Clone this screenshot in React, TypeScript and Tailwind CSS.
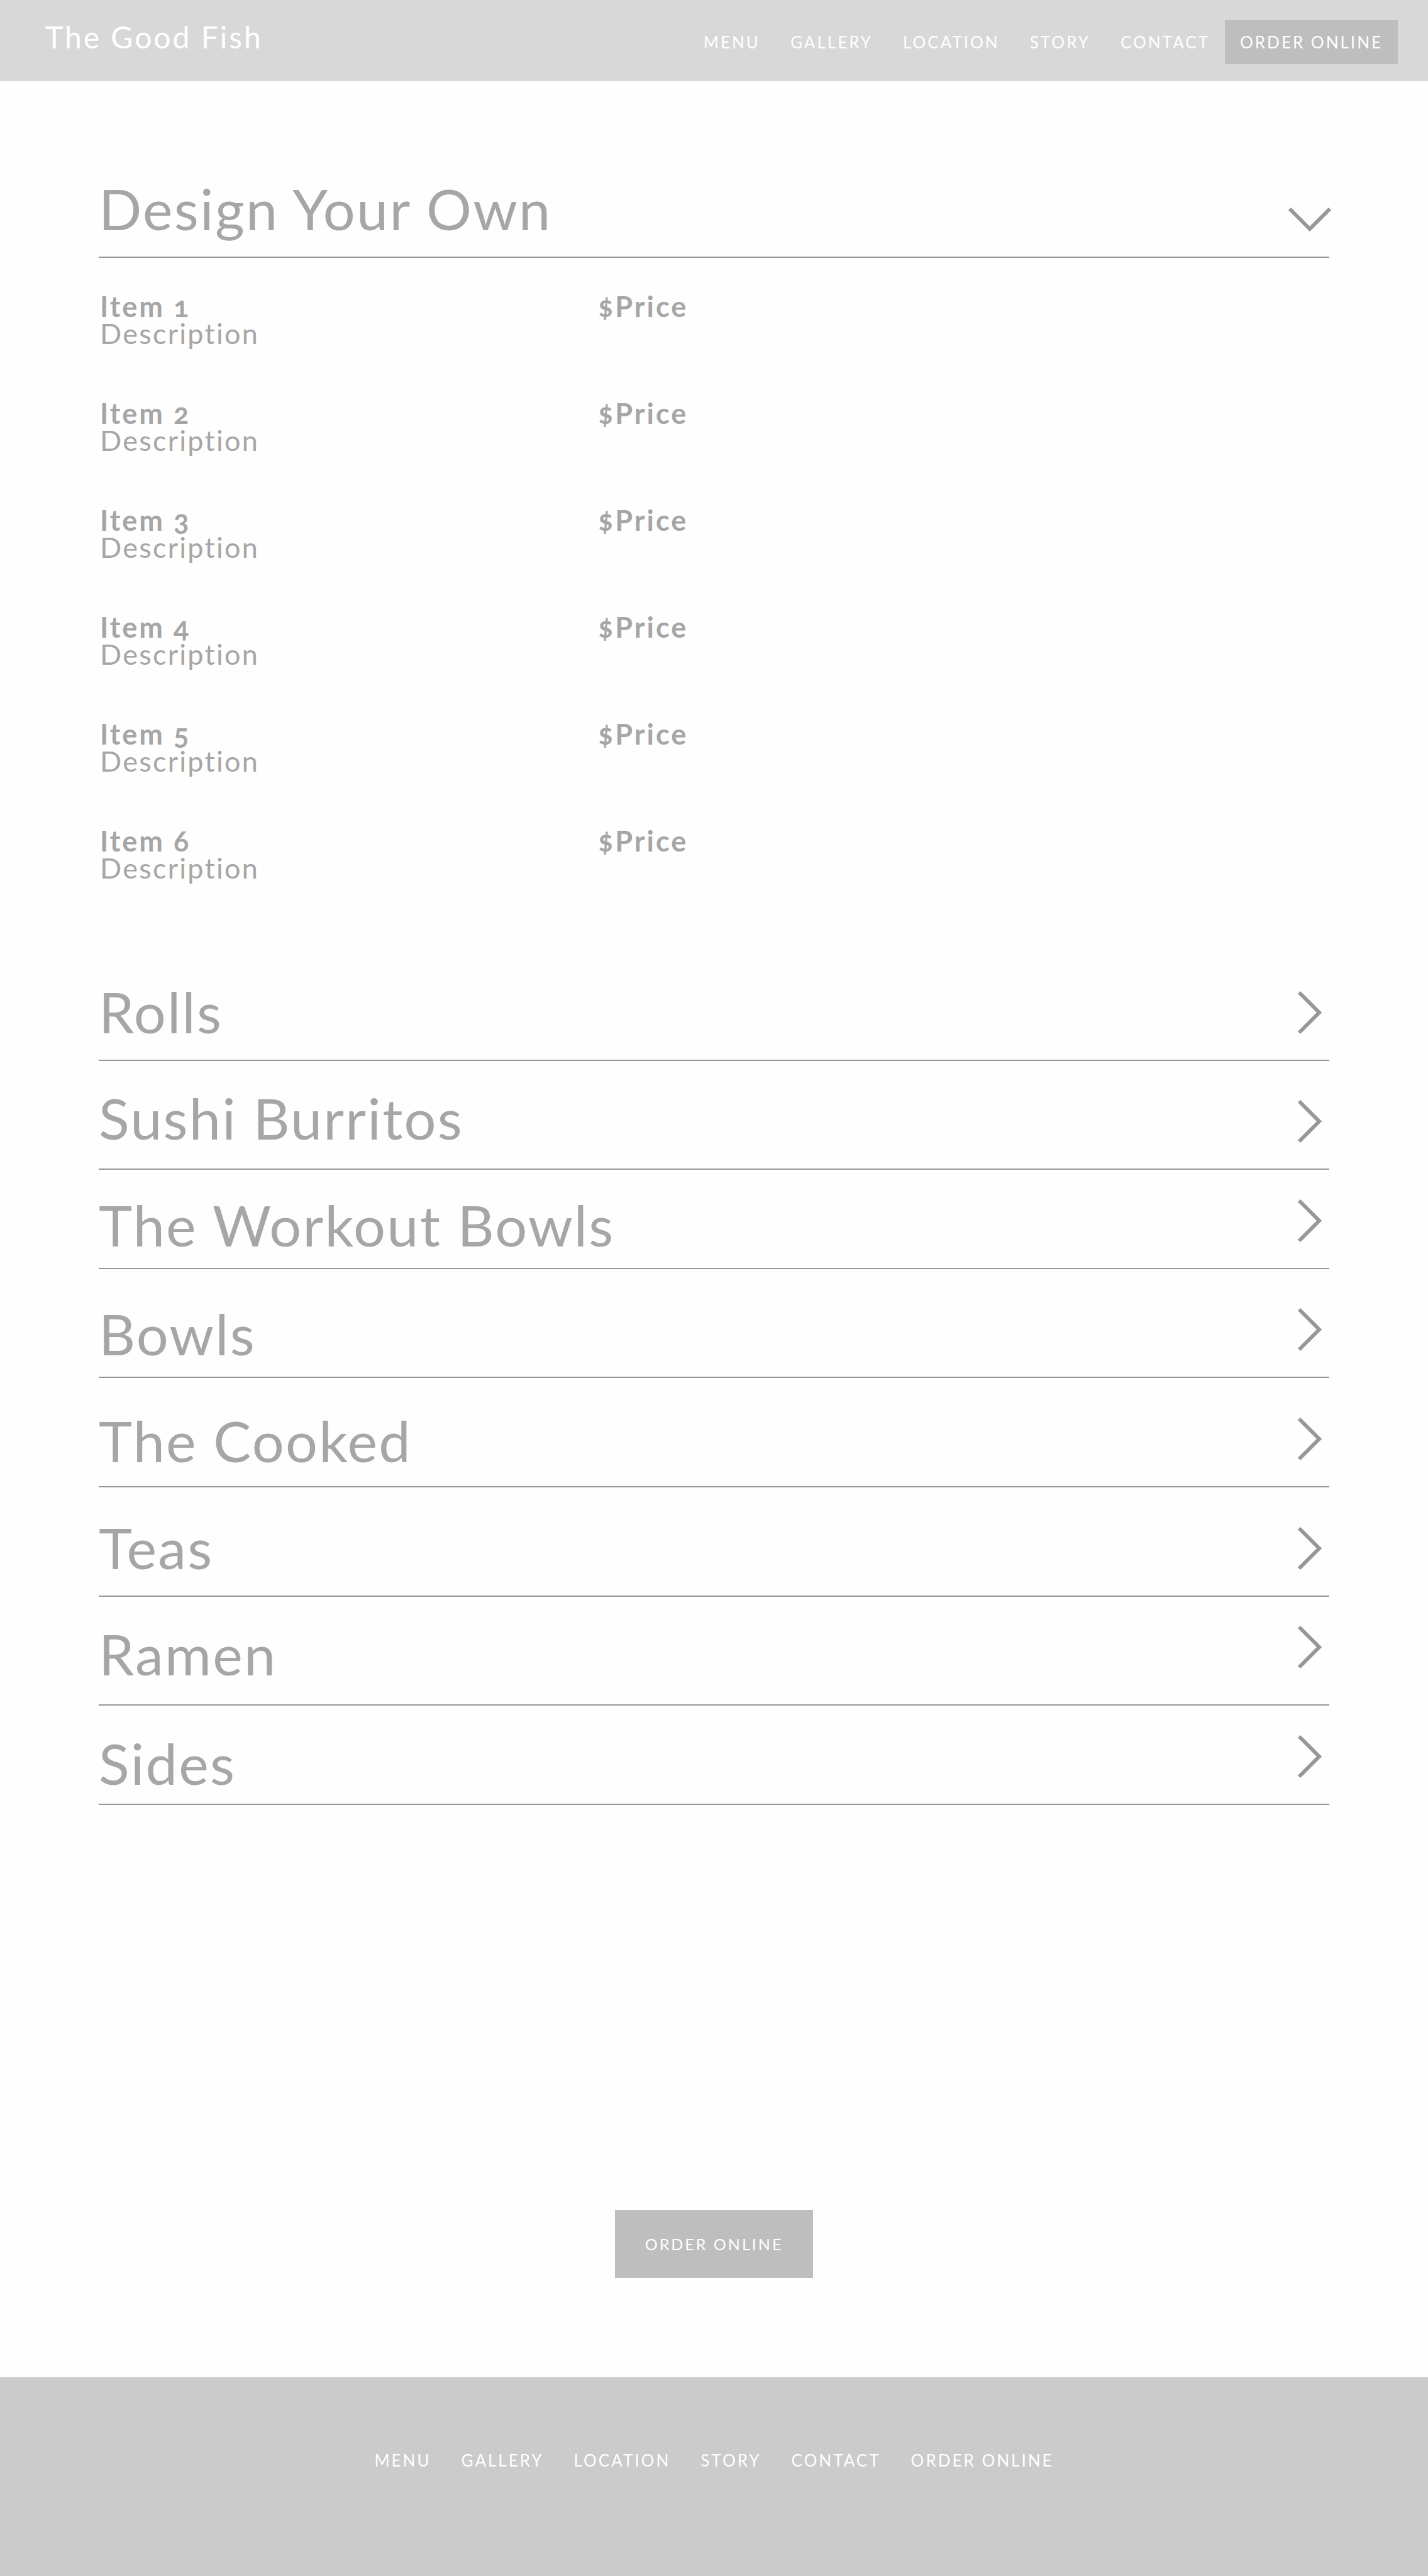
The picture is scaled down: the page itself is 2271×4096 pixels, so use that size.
import { useState } from "react";

const links = ["MENU", "GALLERY", "LOCATION", "STORY", "CONTACT"];

const items = [1, 2, 3, 4, 5, 6];

const sections = [
  { title: "Rolls", row: "min-h-[173px]", text: "pb-8", icon: "pb-10" },
  { title: "Sushi Burritos", row: "min-h-[173px]", text: "pb-9", icon: "pb-10" },
  { title: "The Workout Bowls", row: "min-h-[158px]", text: "pb-6", icon: "pb-10" },
  { title: "Bowls", row: "min-h-[173px]", text: "pb-6", icon: "pb-10" },
  { title: "The Cooked", row: "min-h-[174px]", text: "pb-7", icon: "pb-10" },
  { title: "Teas", row: "min-h-[174px]", text: "pb-8", icon: "pb-10" },
  { title: "Ramen", row: "min-h-[173px]", text: "pb-9", icon: "pb-14" },
  { title: "Sides", row: "min-h-[158px]", text: "pb-5", icon: "pb-10" },
];

function Chevron({ open }: { open: boolean }) {
  return (
    <svg viewBox="0 0 70 70" className="size-[70px]" fill="none" stroke="#979797" strokeWidth="6" aria-hidden="true">
      <path d={open ? "M3 18 35 50 67 18" : "M18 3 50 35 18 67"} />
    </svg>
  );
}

type RowProps = {
  title: string;
  row: string;
  text: string;
  icon: string;
  open: boolean;
  onToggle: () => void;
};

function SectionRow({ title, row, text, icon, open, onToggle }: RowProps) {
  return (
    <h2>
      <button
        type="button"
        aria-expanded={open}
        onClick={onToggle}
        className={`flex w-full items-end justify-between border-b-2 border-[#979797] text-left ${row}`}
      >
        <span className={`text-[90px] leading-[90px] tracking-wide ${text}`}>{title}</span>
        <span className={`-mr-1 shrink-0 ${icon}`}>
          <Chevron open={open} />
        </span>
      </button>
    </h2>
  );
}

export default function App() {
  const [designOpen, setDesignOpen] = useState(true);
  const [openTitle, setOpenTitle] = useState("");

  return (
    <div className="bg-[#fefefe] font-['Lato',sans-serif] text-[#a6a6a6]">
      <header className="flex items-baseline justify-between bg-[#d8d8d8] pt-8 pr-12 pb-[27px] pl-[72px] text-white">
        <a href="#home" className="text-5xl leading-[48px] tracking-[3px]">
          The Good Fish
        </a>
        <nav aria-label="Main" className="flex items-baseline text-[26px] leading-8 tracking-[3px]">
          {links.map((label) => (
            <a key={label} href={`#${label.toLowerCase()}`} className="px-6">
              {label}
            </a>
          ))}
          <a href="#order" className="bg-[#bebebe] px-6 py-[19px]">
            ORDER ONLINE
          </a>
        </nav>
      </header>

      <main className="px-[157px] pt-[108px]">
        <SectionRow
          title="Design Your Own"
          row="min-h-[173px]"
          text="pb-8"
          icon="pb-6"
          open={designOpen}
          onToggle={() => setDesignOpen(!designOpen)}
        />
        {designOpen && (
          <ul className="flex flex-col gap-[84px] px-0.5 pt-14 pb-7 text-[45px] leading-[43px] oldstyle-nums">
            {items.map((n) => (
              <li key={n}>
                <div className="flex font-bold tracking-[3px]">
                  <span className="w-[792px]">Item {n}</span>
                  <span>$Price</span>
                </div>
                <p className="tracking-wider">Description</p>
              </li>
            ))}
          </ul>
        )}
        <div className="pt-21">
          {sections.map((s) => (
            <SectionRow
              key={s.title}
              {...s}
              open={openTitle === s.title}
              onToggle={() => setOpenTitle(openTitle === s.title ? "" : s.title)}
            />
          ))}
        </div>
        <div className="flex justify-center pt-[644px] pb-[158px]">
          <button
            type="button"
            className="bg-[#bebebe] px-12 py-[38px] text-[25px] leading-8 tracking-[3px] text-white"
          >
            ORDER ONLINE
          </button>
        </div>
      </main>

      <footer className="bg-[#cbcbcb] pt-[116px] pb-[168px] text-white">
        <nav aria-label="Footer" className="flex justify-center gap-12 text-[26px] leading-8 tracking-[3px]">
          {links.map((label) => (
            <a key={label} href={`#${label.toLowerCase()}`}>
              {label}
            </a>
          ))}
          <a href="#order">ORDER ONLINE</a>
        </nav>
      </footer>
    </div>
  );
}
